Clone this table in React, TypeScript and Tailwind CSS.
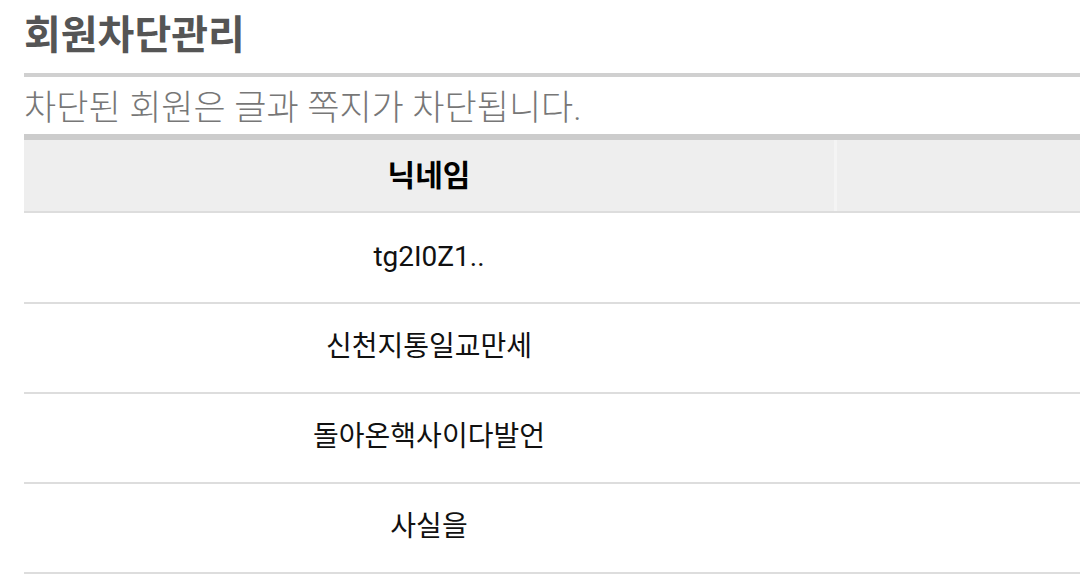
const rows = ['tg2I0Z1..', '신천지통일교만세', '돌아온핵사이다발언', '사실을']

const font = { fontFamily: 'Roboto, "Noto Sans CJK KR", sans-serif' }

export default function App() {
    return (
        <div className="min-h-[585px] bg-white pl-6 text-black" style={font}>
            {/* Title */}
            <h1 className="flex h-[73px] items-center pb-[2px] text-[40px] font-bold leading-none text-[#555]">
                회원차단관리
            </h1>
            <div className="h-[4px] bg-[#d0d0d0]" />

            {/* Note */}
            <p className="flex h-[57px] items-center pt-[6px] text-[35px] font-light leading-none text-[#777]">
                차단된 회원은 글과 쪽지가 차단됩니다.
            </p>

            {/* Table */}
            <div className="border-t-[6px] border-[#cccccc]">
                <div className="flex h-[73px] border-b-[2px] border-[#dddddd] bg-[#eeeeee]">
                    <div className="flex w-[810px] items-center justify-center text-[30px] font-bold">
                        닉네임
                    </div>
                    <div className="w-[3px] bg-[#f4f4f4]" />
                    <div className="flex-1" />
                </div>
                {rows.map((name, i) => (
                    <div
                        key={name}
                        className={
                            i === 0
                                ? 'flex h-[91px] border-b-[2px] border-[#dddddd]'
                                : 'flex h-[90px] border-b-[2px] border-[#dddddd]'
                        }
                    >
                        <div className="flex w-[810px] items-center justify-center pb-[2px] text-[28px] text-[#111]">
                            {name}
                        </div>
                        <div className="flex-1" />
                    </div>
                ))}
            </div>
        </div>
    )
}
